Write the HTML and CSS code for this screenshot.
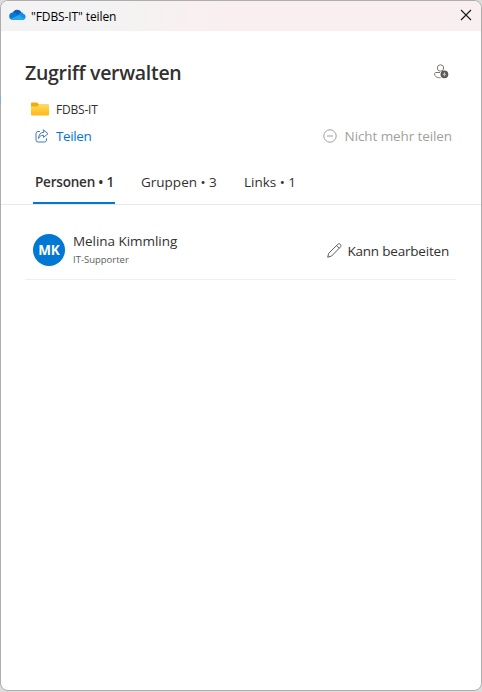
FILE: index.html
```html
<!DOCTYPE html>
<html lang="de">
<head>
<meta charset="utf-8">
<title>"FDBS-IT" teilen</title>
<link rel="stylesheet" href="styles.css">
</head>
<body>
<main class="window">
  <header class="titlebar">
    <svg class="cloud" width="17" height="12" viewBox="0 0 17 12">
      <path d="M3.6 4.1A5 5 0 0 1 12.7 3.4L9 7Z" fill="#0a5fb8"/>
      <path d="M3.4 3.6C5 3.2 6.2 3.7 7.3 4.5L11 6.8 4 10.8C-.9 11-1.1 4.3 3.4 3.6Z" fill="#0878d0"/>
      <path d="M9.7 6.2C10.5 3 14 3 14.4 5c3 .5 3 5-.2 5.7L10 9Z" fill="#1490df"/>
      <path d="M1.8 9.8 9.8 6.1 15.7 9.7C15.2 10.7 14.5 11 13.5 11H4.2C3.2 11 2.4 10.6 1.8 9.8Z" fill="#28a8ea"/>
    </svg>
    <span class="caption">"FDBS-IT" teilen</span>
    <svg class="close" width="12" height="12" viewBox="0 0 12 12"><path d="M1 1 11 11M11 1 1 11" fill="none" stroke="#1b1919" stroke-width="1.15"/></svg>
  </header>
  <section class="heading">
    <h1>Zugriff verwalten</h1>
    <svg width="15" height="15" viewBox="0 0 15 15">
      <circle cx="6.5" cy="4" r="3.2" fill="none" stroke="#797673"/>
      <path d="M6 8.5H2C.9 8.5.6 9.2.6 10c0 2.500 2.500 3.800 6 3.800" fill="none" stroke="#797673"/>
      <circle cx="10.4" cy="10.3" r="3.9" fill="#5b5855"/>
      <path d="M10.4 8.3v4M8.8 10.3h3.2" stroke="#c8c8c8"/>
    </svg>
  </section>
  <div class="folder">
    <svg width="18" height="14" viewBox="0 0 18 14">
      <defs><linearGradient id="fold" x2="0" y2="1"><stop stop-color="#ffdc58"/><stop offset="1" stop-color="#ffb51c"/></linearGradient></defs>
      <path d="M0 1.5Q0 .5 1 .5H6L8 2.5H17Q18 2.5 18 3.5V8H0Z" fill="#efad0c"/>
      <path d="M0 4.5H6.2L8 2.8H17.2Q18 2.8 18 3.8V12.5Q18 13.5 17 13.5H1Q0 13.5 0 12.5Z" fill="url(#fold)"/>
    </svg>
    <span class="folder-name">FDBS-IT</span>
  </div>
  <div class="actions">
    <svg width="14" height="14" viewBox="0 0 14 14" fill="none" stroke="#4379bd" stroke-linejoin="round" stroke-linecap="round">
      <path d="M4.5 2.5H3Q1 2.5 1 4.5V11Q1 13 3 13H9.5Q11.5 13 11.5 11V9.8"/>
      <path d="M8.5 1 13 4.7 8.5 8.4V6.3C6 6.3 4.7 7.3 3.5 9.5 3.7 6 5.3 3.3 8.5 3.2Z"/>
    </svg>
    <span class="share">Teilen</span>
    <svg class="stop-icon" width="14" height="14" viewBox="0 0 14 14" fill="none" stroke="#a19f9d"><circle cx="7" cy="7" r="6.2"/><path d="M4 7H10"/></svg>
    <span class="stop">Nicht mehr teilen</span>
  </div>
  <nav class="tabs">
    <span class="tab active">Personen • 1</span>
    <span class="tab groups">Gruppen • 3</span>
    <span class="tab links">Links • 1</span>
  </nav>
  <section class="person">
    <span class="avatar">MK</span>
    <div class="identity"><div class="name">Melina Kimmling</div><div class="role">IT-Supporter</div></div>
    <svg width="15" height="15" viewBox="0 0 15 15" fill="none" stroke="#625b59" stroke-linejoin="round"><path d="M.7 14.2 1.7 10.3 10.8 1.3C12.5-.2 15 2 13.5 3.9L4.5 13.1ZM9.5 2.6 12.2 5.3"/></svg>
    <span class="permission">Kann bearbeiten</span>
  </section>
</main>
</body>
</html>
```
FILE: styles.css
```css
* { box-sizing: border-box; }
body { margin: 0; background: #dcdcdc; font-family: "Open Sans", "Noto Sans", sans-serif; font-size: 13.5px; color: #323130; }
svg { display: block; flex: none; }
span, h1, .name, .role { white-space: nowrap; }
.window { position: relative; width: 482px; height: 691px; border: 1px solid #adadad; border-radius: 8px; background: #fff; overflow: hidden; }
.window::before { content: ""; position: fixed; left: 0; top: 96px; width: 1px; height: 7px; background: #7eb2ce; }
.titlebar { height: 30px; display: flex; align-items: center; padding: 0 9px 0 8px; background: linear-gradient(90deg, #f3f3f3 20%, #f9eff0 45%); }
.caption { margin-left: 5px; font-size: 12px; letter-spacing: -.1px; color: #000; }
.cloud { margin-top: -2px; }
.close { margin-left: auto; margin-top: -2px; }
.heading { height: 66px; display: flex; align-items: center; justify-content: space-between; padding: 17px 32px 0 24px; }
.heading svg { margin-top: -2px; }
h1 { margin: 0; font-size: 19.5px; line-height: 28px; font-weight: 600; letter-spacing: -.3px; }
.folder { height: 24px; display: flex; align-items: center; padding-left: 30px; }
.folder-name { margin-left: 7px; font-size: 12px; letter-spacing: -.2px; }
.actions { height: 30px; display: flex; align-items: center; padding: 0 29px 0 34px; }
.share { margin-left: 7px; color: #0078d4; letter-spacing: -.4px; }
.stop-icon { margin-left: auto; }
.stop { margin-left: 8px; color: #a19f9d; letter-spacing: -.1px; }
.tabs { height: 54px; display: flex; align-items: flex-end; padding-left: 32px; border-bottom: 1px solid #e8e8e8; }
.tab { height: 43px; line-height: 43px; }
.active { width: 82px; padding-left: 2px; font-weight: 600; letter-spacing: -.2px; border-bottom: 2px solid #0078d4; }
.groups { width: 103px; padding-left: 26px; }
.links { padding-left: 26px; }
.person { height: 75px; margin: 0 25px 0 24px; display: flex; align-items: center; padding: 16px 7px 0 8px; border-bottom: 1px solid #f0efee; }
.avatar { width: 32px; height: 32px; border-radius: 50%; background: #0078d4; color: #fff; font-weight: 700; line-height: 32px; text-align: center; letter-spacing: -.2px; }
.identity { flex: 1; margin-left: 8px; }
.name { line-height: 20px; letter-spacing: -.05px; }
.role { font-size: 9.5px; line-height: 18px; color: #605e5c; }
.permission { margin-left: 5px; margin-top: 2px; letter-spacing: -.2px; }
```
